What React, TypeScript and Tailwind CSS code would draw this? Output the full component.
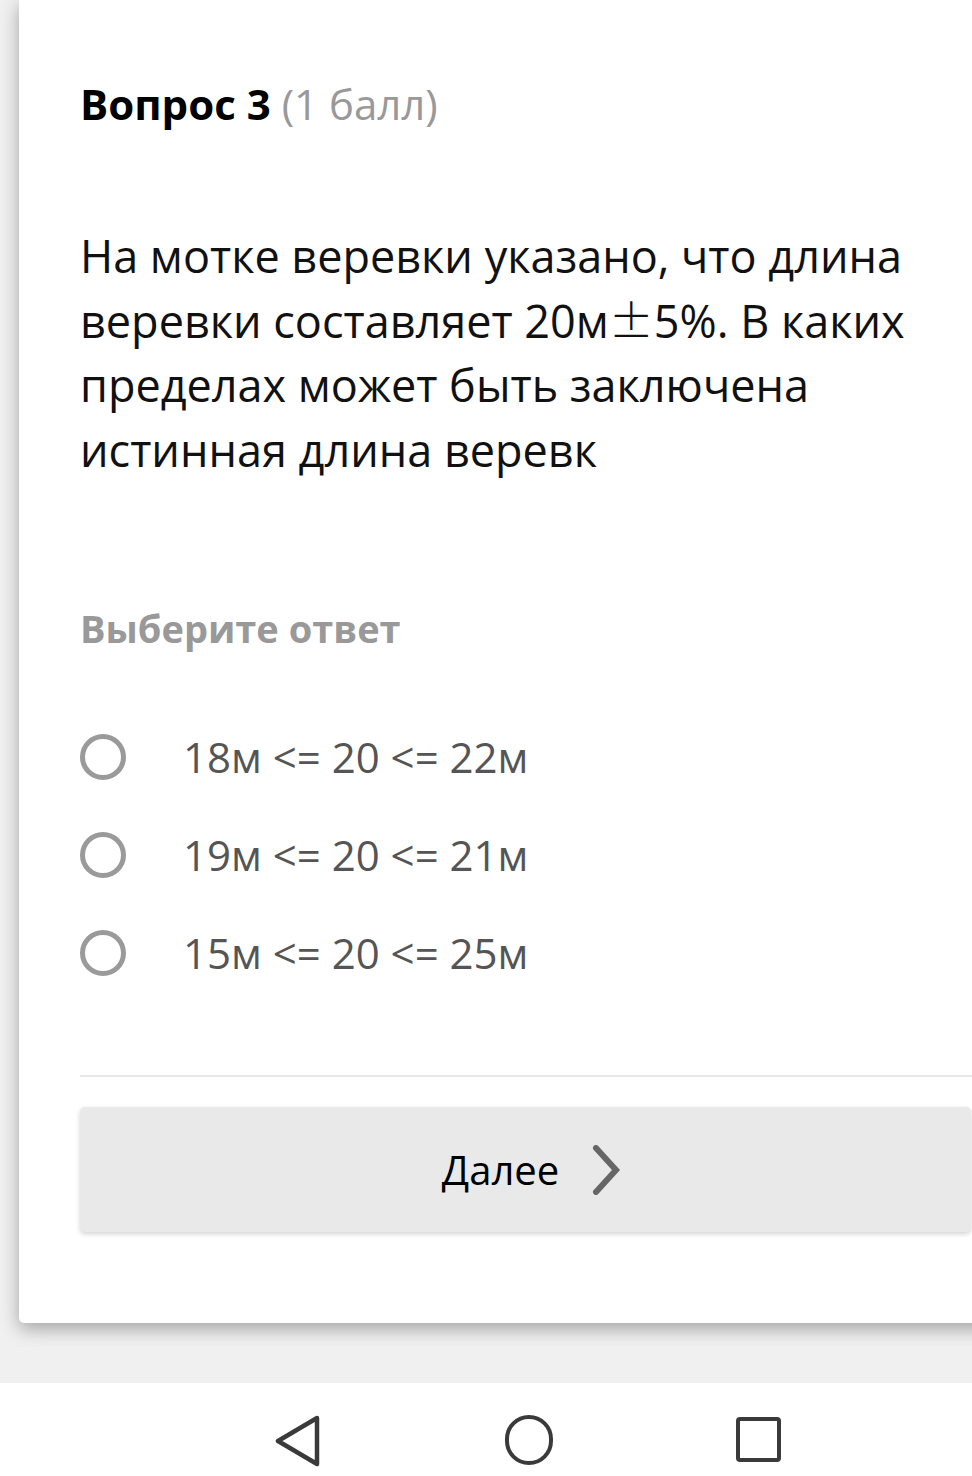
import React from 'react';

const options = ['18м <= 20 <= 22м', '19м <= 20 <= 21м', '15м <= 20 <= 25м'];

const font = { fontFamily: '"Open Sans", "Noto Sans", sans-serif' };
const cjk = { fontFamily: '"Noto Sans CJK SC", sans-serif' };

const App: React.FC = () => {
  return (
    <div
      className="w-[972px] h-[1476px] overflow-hidden bg-[#f0f0f0] flex flex-col"
      style={font}
    >
      {/* Question card */}
      <div className="relative z-10 ml-[19px] w-[980px] h-[1323px] shrink-0 bg-white rounded-b-[5px] shadow-[0_6px_18px_rgba(0,0,0,0.32)] pl-[61px] pt-[74px]">
        <h2 className="text-[42px] leading-[59px] text-black">
          <span className="font-bold">Вопрос 3</span>{' '}
          <span className="text-[#999]">(1 балл)</span>
        </h2>

        <p className="mt-[91px] w-[860px] text-[45px] leading-[64.5px] text-[#111]">
          На мотке веревки указано, что длина веревки составляет 20м<span style={cjk} className="font-light leading-[1]">±</span>5%. В каких пределах может быть заключена истинная длина веревк
        </p>

        <div className="mt-[121px] text-[38px] leading-[50px] font-bold text-[#999]">Выберите ответ</div>

        <div className="mt-[81px] flex flex-col gap-[52px]">
          {options.map((o) => (
            <label key={o} className="flex items-center h-[46px]">
              <span className="w-[46px] h-[46px] shrink-0 rounded-full border-[5px] border-[#9a9a9a]" />
              <span className="ml-[57px] text-[42px] leading-[46px] text-[#555]">{o}</span>
            </label>
          ))}
        </div>

        <div className="mt-[99px] h-[2px] bg-[#e6e6e6]" />

        <button className="mt-[30px] w-[891px] h-[125px] rounded-[5px] bg-[#e9e9e9] shadow-[0_2px_5px_rgba(0,0,0,0.18)] flex items-center justify-center gap-[32px]">
          <span className="text-[40px] text-black ml-[12px]">Далее</span>
          <svg width="30" height="50" viewBox="0 0 30 50" fill="none">
            <polyline points="5,3 25,25 5,47" stroke="#666" strokeWidth="6" strokeLinecap="round" strokeLinejoin="miter" />
          </svg>
        </button>
      </div>

      <div className="flex-1" />

      {/* System navigation */}
      <div className="h-[93px] shrink-0 bg-white relative">
        <div className="absolute left-[275px] top-[32px]">
          <svg width="46" height="52" viewBox="0 0 46 52" fill="none">
            <path d="M42 3 L3 26 L42 49 Z" stroke="#3a3a3a" strokeWidth="4.5" strokeLinejoin="round" />
          </svg>
        </div>
        <div className="absolute left-[505px] top-[32px] w-[48px] h-[50px] rounded-full border-[4.5px] border-[#3a3a3a]" />
        <div className="absolute left-[736px] top-[34px] w-[45px] h-[45px] rounded-[4px] border-[4.5px] border-[#3a3a3a]" />
      </div>
    </div>
  );
};

export default App;
